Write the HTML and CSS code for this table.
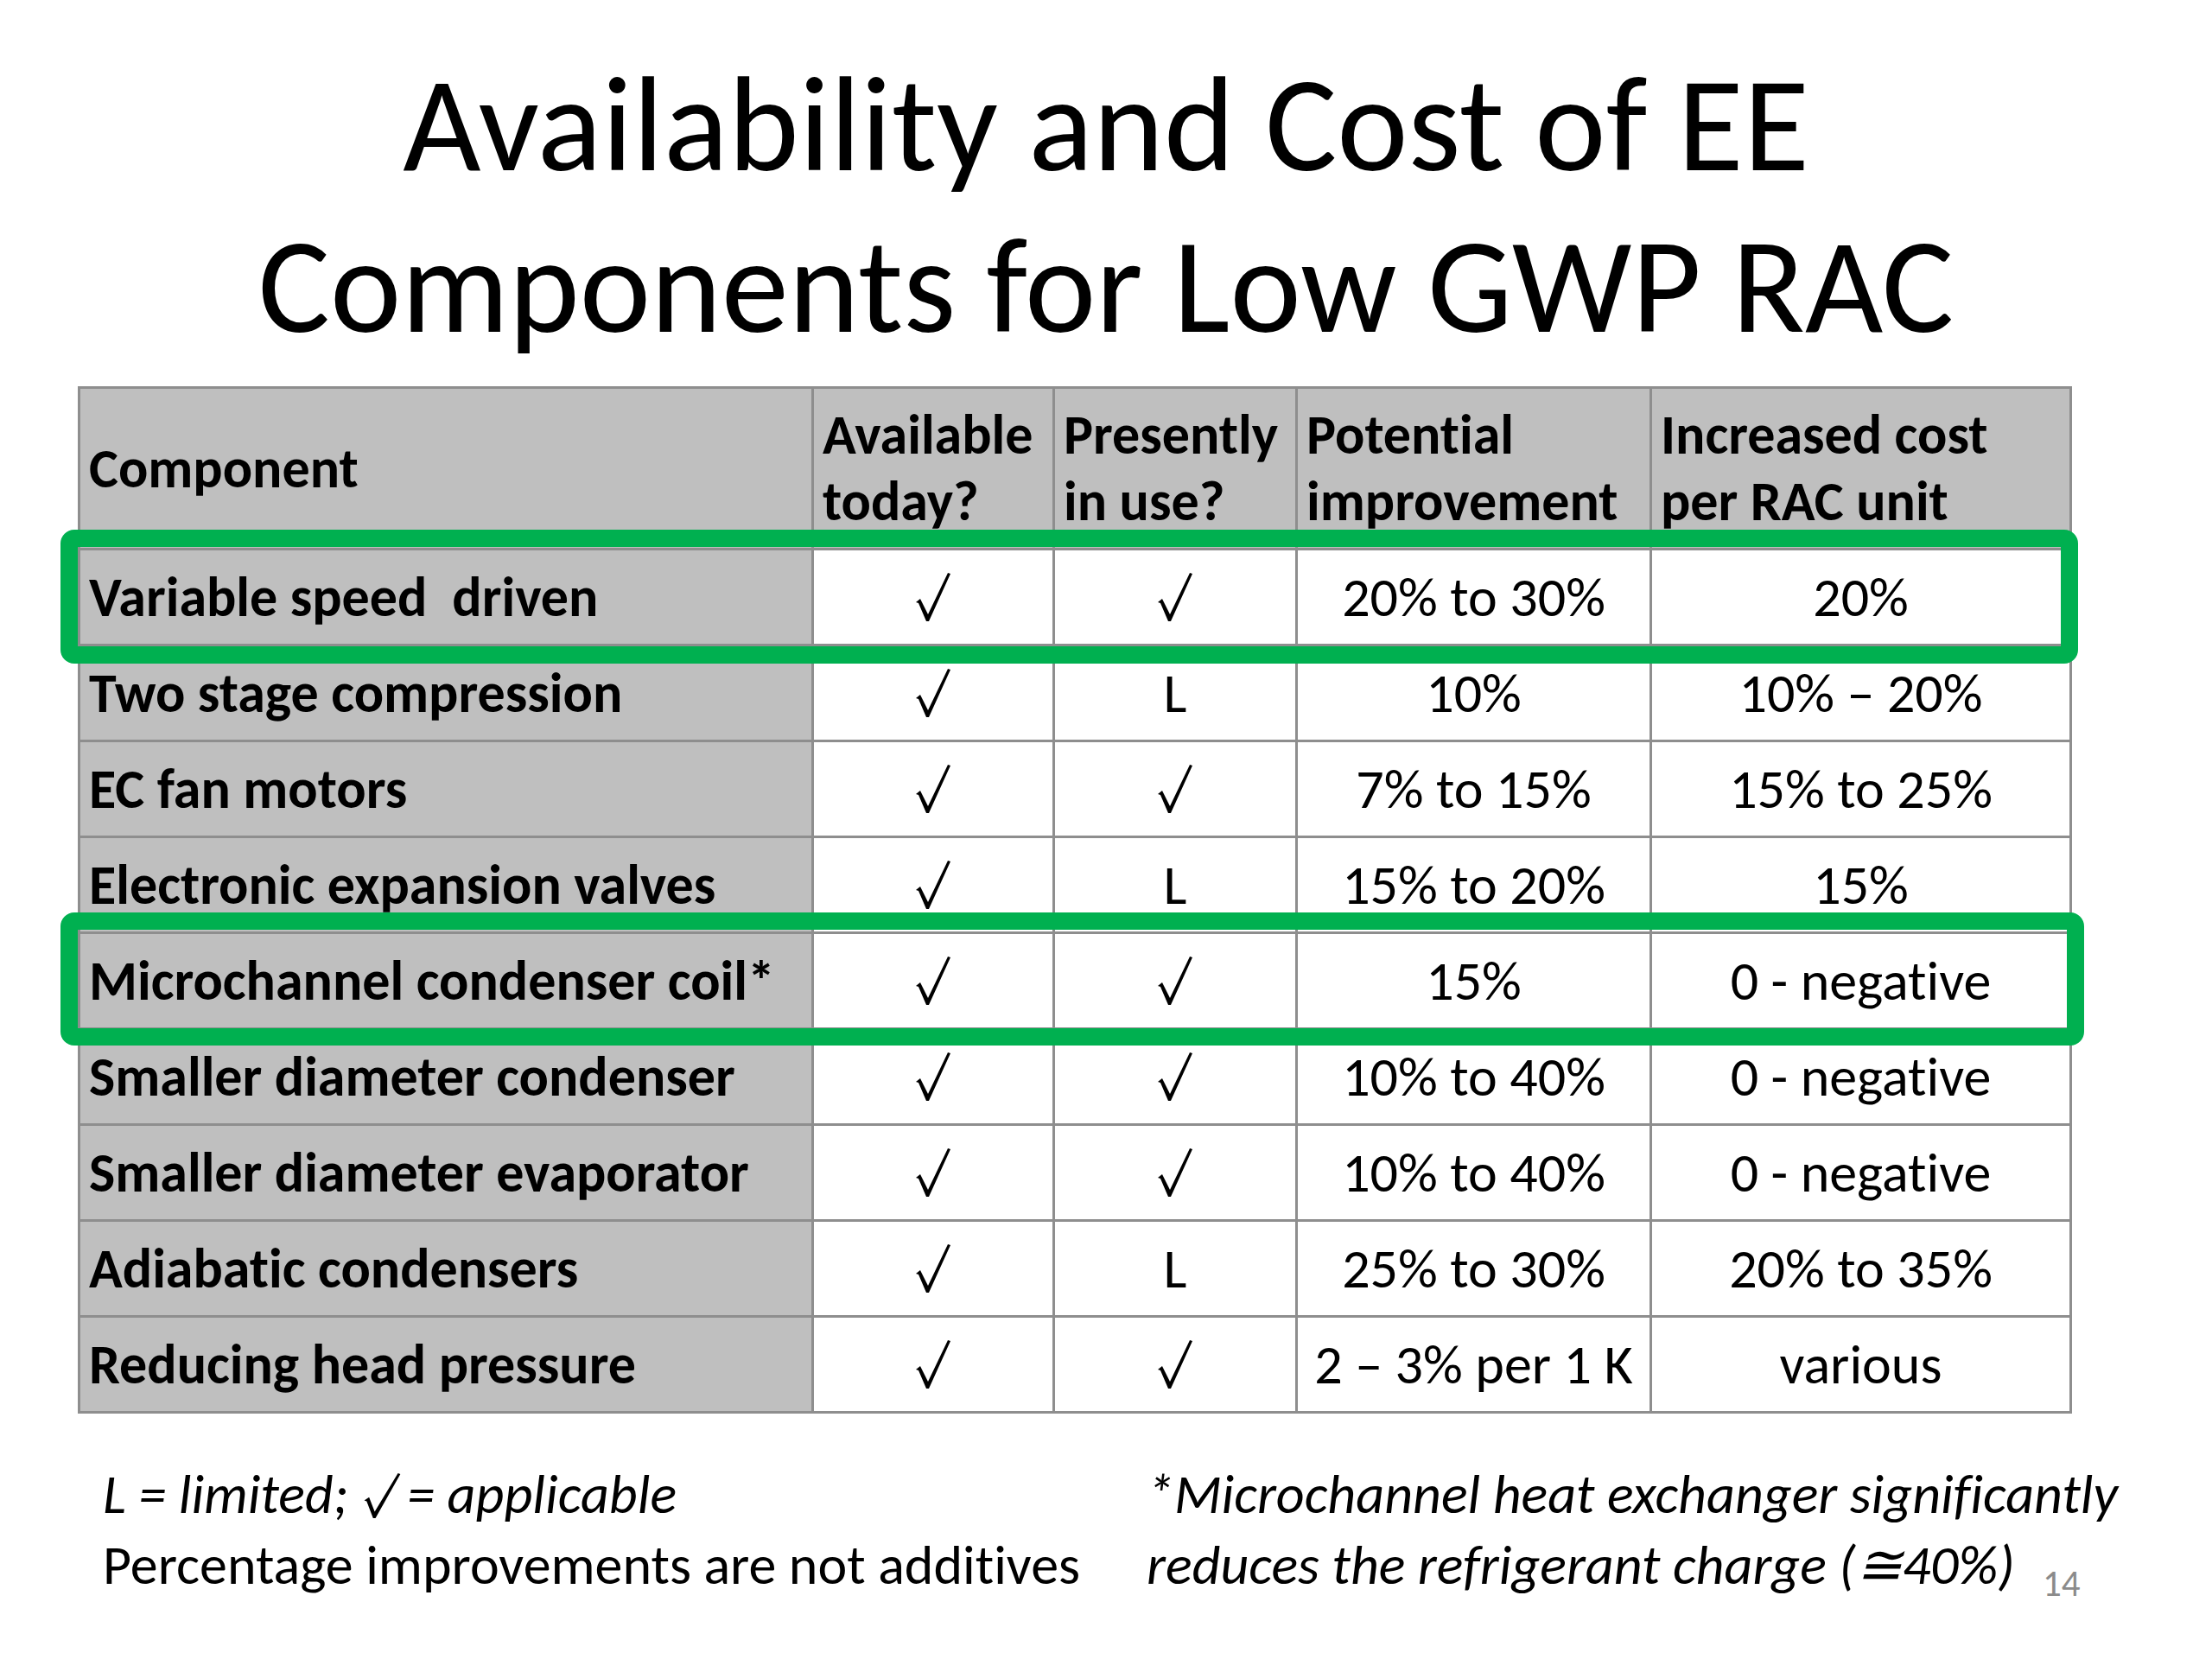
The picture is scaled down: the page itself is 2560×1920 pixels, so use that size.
FILE: index.html
```html
<!DOCTYPE html>
<html lang="en">
<head>
<meta charset="utf-8">
<title>Availability and Cost of EE Components for Low GWP RAC</title>
<link rel="stylesheet" href="styles.css">
</head>
<body>
<div class="slide">
  <h1 class="title">Availability and Cost of EE<br>Components for Low GWP RAC</h1>
  <div class="table-wrap">
    <table class="grid">
      <colgroup>
        <col class="c1"><col class="c2"><col class="c3"><col class="c4"><col class="c5">
      </colgroup>
      <thead>
        <tr class="head">
          <th>Component</th>
          <th>Available<br>today?</th>
          <th>Presently<br>in use?</th>
          <th>Potential<br>improvement</th>
          <th>Increased cost<br>per RAC unit</th>
        </tr>
      </thead>
      <tbody>
        <tr><th>Variable speed&nbsp; driven</th><td><svg class="chk" viewBox="0 0 40 56" role="img" aria-label="√"><polygon points="0,34 5,30 14,48 37,0 40,1 15,56 12,56 3,35"/></svg></td><td><svg class="chk" viewBox="0 0 40 56" role="img" aria-label="√"><polygon points="0,34 5,30 14,48 37,0 40,1 15,56 12,56 3,35"/></svg></td><td>20% to 30%</td><td>20%</td></tr>
        <tr><th>Two stage compression</th><td><svg class="chk" viewBox="0 0 40 56" role="img" aria-label="√"><polygon points="0,34 5,30 14,48 37,0 40,1 15,56 12,56 3,35"/></svg></td><td>L</td><td>10%</td><td>10% – 20%</td></tr>
        <tr><th>EC fan motors</th><td><svg class="chk" viewBox="0 0 40 56" role="img" aria-label="√"><polygon points="0,34 5,30 14,48 37,0 40,1 15,56 12,56 3,35"/></svg></td><td><svg class="chk" viewBox="0 0 40 56" role="img" aria-label="√"><polygon points="0,34 5,30 14,48 37,0 40,1 15,56 12,56 3,35"/></svg></td><td>7% to 15%</td><td>15% to 25%</td></tr>
        <tr><th>Electronic expansion valves</th><td><svg class="chk" viewBox="0 0 40 56" role="img" aria-label="√"><polygon points="0,34 5,30 14,48 37,0 40,1 15,56 12,56 3,35"/></svg></td><td>L</td><td>15% to 20%</td><td>15%</td></tr>
        <tr><th>Microchannel condenser coil*</th><td><svg class="chk" viewBox="0 0 40 56" role="img" aria-label="√"><polygon points="0,34 5,30 14,48 37,0 40,1 15,56 12,56 3,35"/></svg></td><td><svg class="chk" viewBox="0 0 40 56" role="img" aria-label="√"><polygon points="0,34 5,30 14,48 37,0 40,1 15,56 12,56 3,35"/></svg></td><td>15%</td><td>0 - negative</td></tr>
        <tr><th>Smaller diameter condenser</th><td><svg class="chk" viewBox="0 0 40 56" role="img" aria-label="√"><polygon points="0,34 5,30 14,48 37,0 40,1 15,56 12,56 3,35"/></svg></td><td><svg class="chk" viewBox="0 0 40 56" role="img" aria-label="√"><polygon points="0,34 5,30 14,48 37,0 40,1 15,56 12,56 3,35"/></svg></td><td>10% to 40%</td><td>0 - negative</td></tr>
        <tr><th>Smaller diameter evaporator</th><td><svg class="chk" viewBox="0 0 40 56" role="img" aria-label="√"><polygon points="0,34 5,30 14,48 37,0 40,1 15,56 12,56 3,35"/></svg></td><td><svg class="chk" viewBox="0 0 40 56" role="img" aria-label="√"><polygon points="0,34 5,30 14,48 37,0 40,1 15,56 12,56 3,35"/></svg></td><td>10% to 40%</td><td>0 - negative</td></tr>
        <tr><th>Adiabatic condensers</th><td><svg class="chk" viewBox="0 0 40 56" role="img" aria-label="√"><polygon points="0,34 5,30 14,48 37,0 40,1 15,56 12,56 3,35"/></svg></td><td>L</td><td>25% to 30%</td><td>20% to 35%</td></tr>
        <tr><th>Reducing head pressure</th><td><svg class="chk" viewBox="0 0 40 56" role="img" aria-label="√"><polygon points="0,34 5,30 14,48 37,0 40,1 15,56 12,56 3,35"/></svg></td><td><svg class="chk" viewBox="0 0 40 56" role="img" aria-label="√"><polygon points="0,34 5,30 14,48 37,0 40,1 15,56 12,56 3,35"/></svg></td><td>2 – 3% per 1 K</td><td>various</td></tr>
      </tbody>
    </table>
    <div class="hl hl-1"></div>
    <div class="hl hl-2"></div>
  </div>
  <div class="notes">
    <div class="note-left">
      <p class="italic">L = limited; <svg class="chk-inline" viewBox="0 0 48 56" role="img" aria-label="√"><polygon points="2,34 8,30 15,48 44,0 47,1 16,56 13,56 5,35"/></svg>= applicable</p>
      <p>Percentage improvements are not additives</p>
    </div>
    <div class="note-right">
      <p class="italic">*Microchannel heat exchanger significantly</p>
      <p class="italic">reduces the refrigerant charge (≅40%)</p>
    </div>
  </div>
  <div class="page-num">14</div>
</div>
</body>
</html>
```

FILE: styles.css
```css
html, body {
  margin: 0;
  padding: 0;
  background: #ffffff;
}

.slide {
  position: relative;
  width: 2560px;
  height: 1920px;
  overflow: hidden;
  font-family: Carlito, Calibri, "Open Sans", sans-serif;
  font-variant-ligatures: none;
  color: #000000;
  background: #ffffff;
}

.title {
  margin: 0;
  padding-top: 50px;
  font-weight: 400;
  font-size: 156px;
  line-height: 187px;
  text-align: center;
}

.table-wrap {
  position: relative;
  margin-top: 23px;
  margin-left: 90px;
  width: 2305px;
}

.grid {
  border-collapse: collapse;
  width: 2305px;
  table-layout: fixed;
  font-size: 64px;
  line-height: 77px;
}

.c1 { width: 849px; }
.c2 { width: 279px; }
.c3 { width: 281px; }
.c4 { width: 410px; }
.c5 { width: 486px; }

.grid th,
.grid td {
  border: 3px solid #8e8e8e;
  vertical-align: middle;
}

.grid td {
  text-align: center;
  padding: 0;
  background: #ffffff;
  font-weight: 400;
}

.grid th {
  text-align: left;
  font-weight: 700;
  background: #bfbfbf;
  white-space: nowrap;
  padding: 0 0 0 10px;
}

.grid .head th {
  height: 184px;
}

.grid tbody tr {
  height: 111px;
}

.chk {
  display: block;
  margin: 0 auto;
  width: 40px;
  height: 56px;
  fill: #000000;
}

.chk-inline {
  display: inline-block;
  width: 46px;
  height: 52px;
  margin-left: 2px;
  margin-right: 6px;
  vertical-align: -6px;
  fill: #000000;
}

.hl {
  position: absolute;
  left: -20px;
  border: 20px solid #00b050;
  border-radius: 16px;
  box-sizing: border-box;
  pointer-events: none;
}

.hl-1 {
  top: 166px;
  width: 2335px;
  height: 155px;
}

.hl-2 {
  top: 609px;
  width: 2342px;
  height: 154px;
}

.notes {
  display: flex;
  margin-top: 52px;
  padding-left: 119px;
  font-size: 64px;
  line-height: 82px;
}

.notes p {
  margin: 0;
}

.note-left {
  width: 1208px;
  flex: none;
}

.note-right {
  flex: none;
}

.italic {
  font-style: italic;
}

.page-num {
  position: absolute;
  left: 2364px;
  top: 1808px;
  font-size: 43px;
  line-height: 50px;
  color: #8b8b8b;
}
```
